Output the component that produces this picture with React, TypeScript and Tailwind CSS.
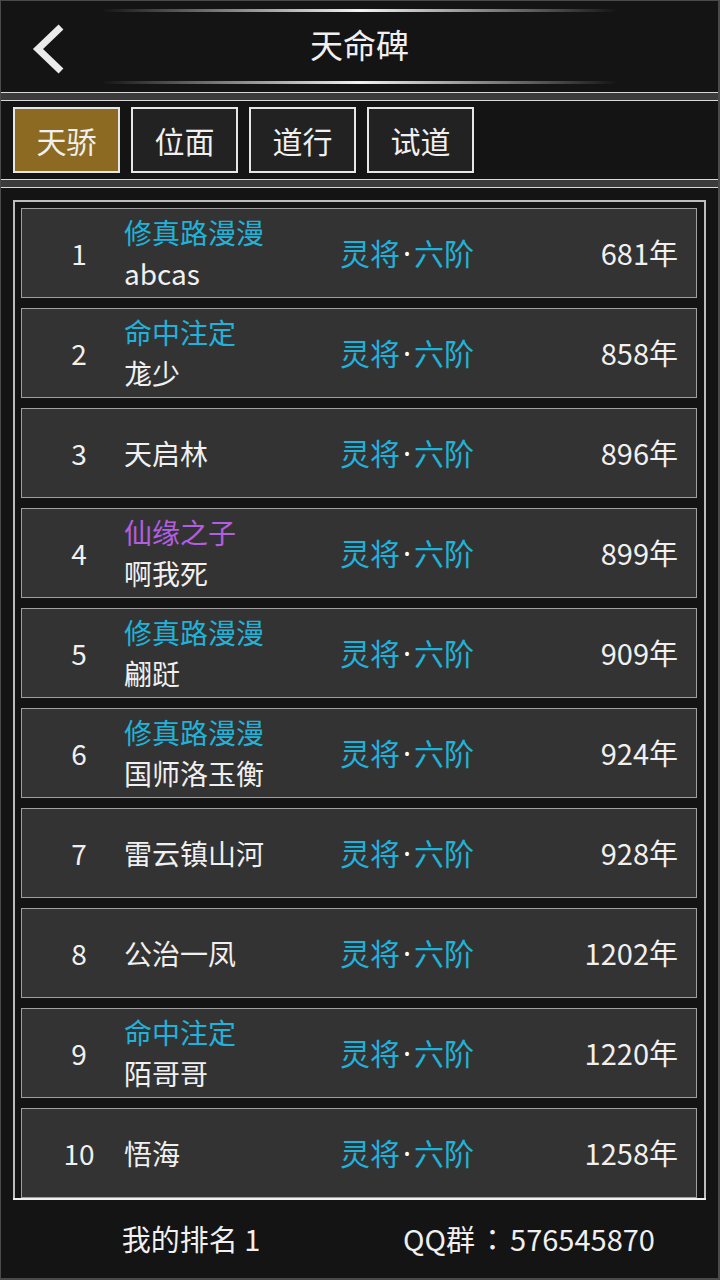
import React from "react";

type Row = {
  rank: number;
  title?: string;
  titleColor?: string;
  name: string;
  years: number;
};

const rows: Row[] = [
  { rank: 1, title: "修真路漫漫", titleColor: "text-[#21b2da]", name: "abcas", years: 681 },
  { rank: 2, title: "命中注定", titleColor: "text-[#21b2da]", name: "尨少", years: 858 },
  { rank: 3, name: "天启林", years: 896 },
  { rank: 4, title: "仙缘之子", titleColor: "text-[#b35ee0]", name: "啊我死", years: 899 },
  { rank: 5, title: "修真路漫漫", titleColor: "text-[#21b2da]", name: "翩跹", years: 909 },
  { rank: 6, title: "修真路漫漫", titleColor: "text-[#21b2da]", name: "国师洛玉衡", years: 924 },
  { rank: 7, name: "雷云镇山河", years: 928 },
  { rank: 8, name: "公治一凤", years: 1202 },
  { rank: 9, title: "命中注定", titleColor: "text-[#21b2da]", name: "陌哥哥", years: 1220 },
  { rank: 10, name: "悟海", years: 1258 },
];

const tabs = ["天骄", "位面", "道行", "试道"];

function Separator() {
  return <div className="h-[9px] border-y border-[#d8d8d8] bg-[#3b3b3b]" />;
}

function GlowLine() {
  return (
    <div className="mx-[100px] h-[3px] rounded-full bg-linear-to-r from-transparent via-[#f2f2f2] to-transparent" />
  );
}

export default function App() {
  return (
    <div
      className="flex h-[1280px] w-[720px] flex-col border-t border-r-2 border-b-2 border-l border-[#4a4a4a] bg-[#141414] text-[#f0f0f0]"
      style={{ fontFamily: '"Noto Sans CJK SC", "Noto Sans", sans-serif' }}
    >
      {/* header */}
      <div className="flex h-[91px] flex-col pt-[8px]">
        <GlowLine />
        <div className="relative flex h-[69px] items-center justify-center">
          <svg className="absolute left-[28px] top-[12px]" width="40" height="50" viewBox="0 0 40 50">
            <path d="M32 3 L9 25 L32 47" fill="none" stroke="#ebebeb" strokeWidth="7" />
          </svg>
          <span className="-mt-[4px] text-[33px] leading-none">天命碑</span>
        </div>
        <GlowLine />
      </div>

      <Separator />

      {/* tabs */}
      <div className="flex h-[78px] items-center gap-[11px] px-[12px]">
        {tabs.map((t, i) => (
          <div
            key={t}
            className={`flex h-[66px] w-[107px] items-center justify-center border-2 border-[#e6e6e6] text-[30px] ${
              i === 0 ? "bg-[#8c6a22]" : "bg-[#222222]"
            }`}
          >
            {t}
          </div>
        ))}
      </div>

      <Separator />

      {/* ranking list */}
      <div className="mx-[12px] mt-[12px] flex flex-col gap-[10px] border-2 border-b-0 border-[#bdbdbd] pt-[6px] pl-[6px] pr-[7px]">
        {rows.map((r) => (
          <div
            key={r.rank}
            className="flex h-[90px] items-center border border-[#a0a0a0] bg-[#333333] text-[28px]"
          >
            <div className="w-[102px] pl-[12px] text-center">{r.rank}</div>
            <div className="flex w-[216px] flex-col leading-[41px]">
              {r.title && <span className={r.titleColor}>{r.title}</span>}
              <span>{r.name}</span>
            </div>
            <div className="flex-1 text-[30px] text-[#21b2da]">
              灵将<span className="mx-[3px] font-['Noto_Sans'] text-white">·</span>六阶
            </div>
            <div className="pr-[18px] text-right text-[29px]">{r.years}年</div>
          </div>
        ))}
      </div>
      <div className="mx-[12px] h-[2px] bg-[#f0f0f0]" />

      {/* footer */}
      <div className="flex flex-1 items-center text-[29px]">
        <div className="w-[380px] text-center">我的排名 1</div>
        <div className="flex-1 pl-[22px]">
          QQ群<span className="mx-[3px] font-['Noto_Sans_CJK_JP']">：</span>576545870
        </div>
      </div>
    </div>
  );
}
